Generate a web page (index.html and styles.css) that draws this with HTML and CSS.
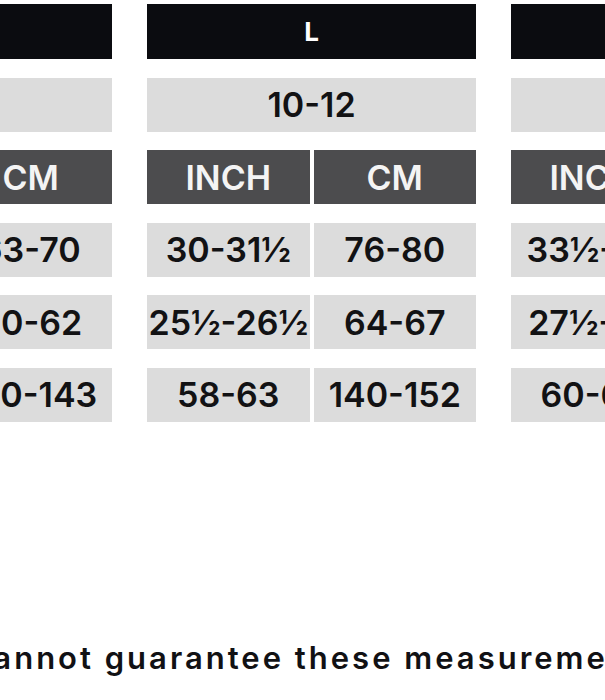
FILE: index.html
```html
<!DOCTYPE html>
<html lang="en">
<head>
<meta charset="utf-8">
<title>Size chart</title>
<link rel="stylesheet" href="styles.css">
</head>
<body>
<div class="chart">
  <div class="size">
    <div class="bar size-name">M</div>
    <div class="bar age">8-10</div>
    <div class="pair">
      <div class="bar unit">INCH</div>
      <div class="bar unit">CM</div>
    </div>
    <div class="pair">
      <div class="bar val">25-27½</div>
      <div class="bar val">63-70</div>
    </div>
    <div class="pair">
      <div class="bar val">23½-24½</div>
      <div class="bar val">60-62</div>
    </div>
    <div class="pair">
      <div class="bar val">51-56</div>
      <div class="bar val">130-143</div>
    </div>
  </div>
  <div class="size">
    <div class="bar size-name">L</div>
    <div class="bar age">10-12</div>
    <div class="pair">
      <div class="bar unit">INCH</div>
      <div class="bar unit">CM</div>
    </div>
    <div class="pair">
      <div class="bar val">30-31½</div>
      <div class="bar val">76-80</div>
    </div>
    <div class="pair">
      <div class="bar val">25½-26½</div>
      <div class="bar val">64-67</div>
    </div>
    <div class="pair">
      <div class="bar val">58-63</div>
      <div class="bar val">140-152</div>
    </div>
  </div>
  <div class="size">
    <div class="bar size-name">XL</div>
    <div class="bar age">12-14</div>
    <div class="pair">
      <div class="bar unit">INCH</div>
      <div class="bar unit">CM</div>
    </div>
    <div class="pair">
      <div class="bar val">33½-35</div>
      <div class="bar val">85-89</div>
    </div>
    <div class="pair">
      <div class="bar val">27½-28</div>
      <div class="bar val">70-72</div>
    </div>
    <div class="pair">
      <div class="bar val">60-66</div>
      <div class="bar val">152-167</div>
    </div>
  </div>
</div>
<p class="note">cannot guarantee these measurements</p>
</body>
</html>
```

FILE: styles.css
```css
html, body {
  margin: 0;
  padding: 0;
  background: #ffffff;
  overflow: hidden;
}

body {
  width: 605px;
  height: 700px;
  padding-top: 4px;
  box-sizing: border-box;
  font-family: "Inter", "DejaVu Sans", sans-serif;
}

.chart {
  display: flex;
  gap: 35px;
  margin-left: -217px;
}

.size {
  flex: 0 0 329px;
  display: flex;
  flex-direction: column;
  gap: 18.6px;
}

.bar {
  height: 54px;
  display: flex;
  align-items: center;
  justify-content: center;
  font-size: 34px;
  font-weight: 600;
  color: #121214;
  background: #dcdcdc;
  white-space: nowrap;
}

.size-name {
  background: #0b0c10;
  color: #ffffff;
  font-size: 26px;
  font-weight: 700;
  height: 55px;
}

.pair {
  display: grid;
  grid-template-columns: 1fr 1fr;
  gap: 4px;
}

.unit {
  background: #4c4c4e;
  color: #f4f4f4;
}

.note {
  margin: 218px 0 0 -28px;
  font-size: 31px;
  line-height: 36px;
  font-weight: 600;
  letter-spacing: 3px;
  color: #111114;
  white-space: nowrap;
}
```
